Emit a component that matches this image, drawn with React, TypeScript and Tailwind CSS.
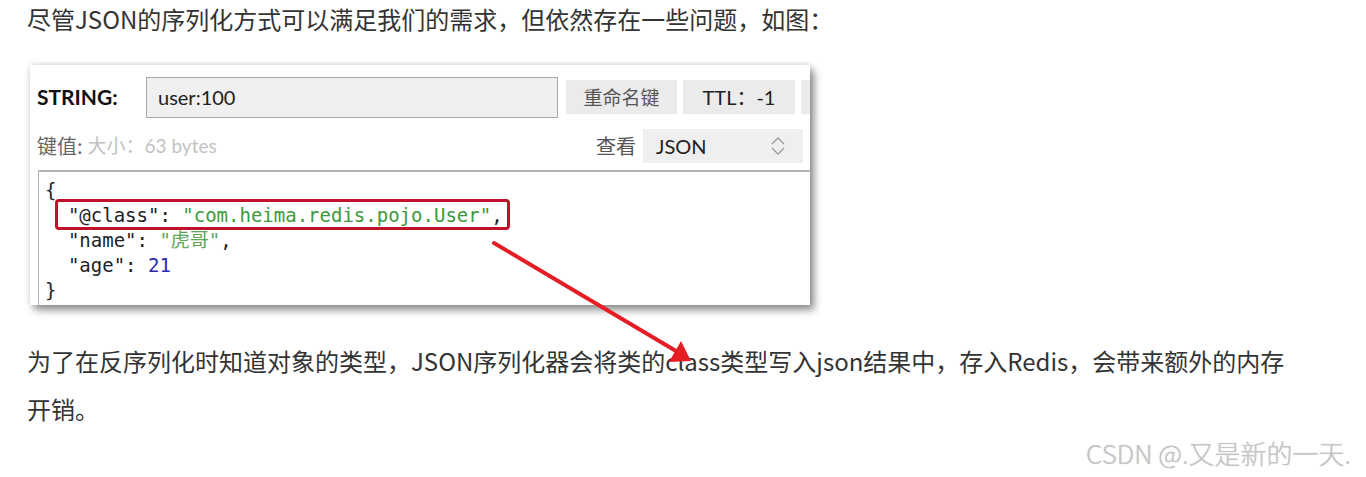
const cjk = "font-['Noto_Sans_CJK_SC',sans-serif]";
const ui = "font-['Lato','Noto_Sans_CJK_SC',sans-serif]";
const mono = "font-['DejaVu_Sans_Mono','Noto_Sans_CJK_SC',monospace]";

function Chevrons() {
  return (
    <svg width="16" height="20" viewBox="0 0 16 20" fill="none" stroke="#9a9a9a" strokeWidth="1.3">
      <path d="M2 8 L8 2 L14 8" />
      <path d="M2 12 L8 18 L14 12" />
    </svg>
  );
}

function KeyPanel() {
  return (
    <div className="relative ml-[30px] mt-[27px] h-[240px] w-[780px] overflow-hidden bg-white shadow-[4px_5px_8px_rgba(0,0,0,0.45),0_-1px_5px_rgba(0,0,0,0.12)]">
      <div className="flex h-[63px] items-center pt-[1px]">
        <span className={`${ui} w-[116px] shrink-0 pl-[7px] text-[21px] font-bold text-[#111]`}>STRING:</span>
        <div className={`${ui} flex h-[41px] w-[412px] shrink-0 items-center border border-[#a9a9a9] bg-[#f0f0f0] pl-[11px] text-[20px] text-[#222]`}>
          user:100
        </div>
        <div className={`${cjk} ml-[8px] flex h-[34px] w-[111px] shrink-0 items-center justify-center bg-[#ebebeb] text-[19px] text-[#555]`}>
          重命名键
        </div>
        <div className={`${ui} ml-[6px] flex h-[34px] w-[112px] shrink-0 items-center justify-center bg-[#ebebeb] text-[20px] text-[#222]`}>
          TTL：-1
        </div>
        <div className="ml-[6px] h-[34px] w-[40px] shrink-0 bg-[#ebebeb]" />
      </div>
      <div className="flex h-[36px] items-center">
        <span className={`${cjk} pl-[7px] text-[20px] text-[#666]`}>键值:</span>
        <span className={`${ui} ml-[5px] text-[19px] text-[#c2c2c2]`}>大小：63 bytes</span>
        <span className={`${cjk} ml-auto mr-[7px] text-[20px] text-[#555]`}>查看</span>
        <div className={`${ui} mr-[7px] flex h-[34px] w-[160px] items-center justify-between bg-[#efefef] pl-[13px] pr-[17px] text-[20px] text-[#222]`}>
          <span>JSON</span>
          <Chevrons />
        </div>
      </div>
      <div className="relative ml-[8px] mt-[6px] h-[135px] border-l border-t-2 border-[#b4b4b4] pt-[6px] pl-[6px]">
        <div className={`${mono} text-[19px] leading-[25px] text-[#222] whitespace-pre`}>
          <div>{"{"}</div>
          <div>
            {"  \"@class\": "}
            <span className="text-[#3c9a3c]">"com.heima.redis.pojo.User"</span>,
          </div>
          <div>
            {"  \"name\": "}
            <span className="text-[#5aa55a]">"虎哥"</span>,
          </div>
          <div>
            {"  \"age\": "}
            <span className="text-[#2a2ab0]">21</span>
          </div>
          <div>{"}"}</div>
        </div>
        <div className="absolute left-[16px] top-[27px] h-[31px] w-[455px] rounded-[4px] border-[3px] border-[#c0102a]" />
      </div>
    </div>
  );
}

export default function App() {
  return (
    <div className="relative h-[477px] w-[1366px] overflow-hidden bg-white">
      <p className={`${cjk} h-[38px] pl-[27px] text-[24px] leading-[38px] text-[#333]`}>
        尽管JSON的序列化方式可以满足我们的需求，但依然存在一些问题，如图：
      </p>
      <KeyPanel />
      <p className={`${cjk} mt-[32px] pl-[27px] text-[24px] leading-[48px] text-[#333]`}>
        为了在反序列化时知道对象的类型，JSON序列化器会将类的class类型写入json结果中，存入Redis，会带来额外的内存
        <br />
        开销。
      </p>
      <svg className="pointer-events-none absolute left-0 top-0" width="1366" height="477">
        <line x1="494" y1="243" x2="676" y2="351" stroke="#e51e25" strokeWidth="4" strokeLinecap="round" />
        <polygon points="691,361 669,362 681,341" fill="#e51e25" />
      </svg>
      <div className={`${cjk} absolute left-[1086px] top-[433px] text-[26px] font-light text-[#c6c6c6] [text-shadow:0_0_1px_rgba(0,0,0,0.25)]`}>
        CSDN @.又是新的一天.
      </div>
    </div>
  );
}
